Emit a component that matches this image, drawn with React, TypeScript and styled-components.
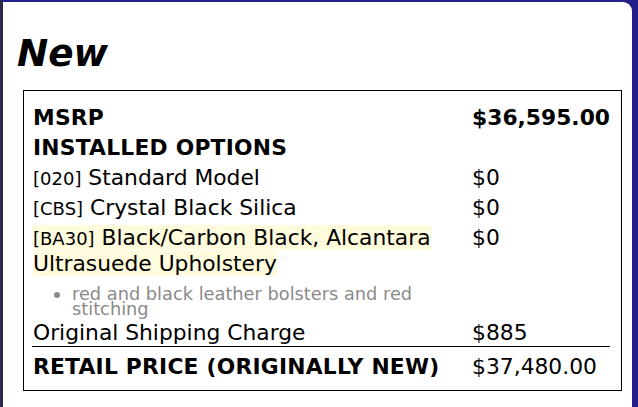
import styled, { createGlobalStyle } from "styled-components";

const GlobalStyle = createGlobalStyle`
  html, body {
    margin: 0;
    padding: 0;
    background: #23208a;
  }
  body {
    font-family: "DejaVu Sans", Verdana, sans-serif;
    color: #000;
  }
`;

const Page = styled.div`
  min-height: 407px;
  padding-top: 2px;
  border-left: 3px solid #2c2b4c;
  box-sizing: border-box;
  display: flex;
`;

const Card = styled.div`
  flex: 1;
  margin-right: 6px;
  background: #fff;
  border-top-right-radius: 9px;
  padding: 30px 10px 16px 20px;
  min-height: 405px;
  box-sizing: border-box;
`;

const Title = styled.h2`
  margin: 0 0 15px -6px;
  font-size: 37.33px;
  line-height: 43px;
  font-weight: bold;
  font-style: italic;
`;

const Box = styled.div`
  border: 1px solid #000;
  padding: 12px 11px 8px 8px;
`;

const Table = styled.table`
  width: 100%;
  border-collapse: collapse;
  font-size: 21.8px;
  line-height: 26px;
`;

type Variant = "total" | "beforeTotal";

const Row = styled.tr<{ $variant?: Variant }>`
  td {
    border-top: ${(p) => (p.$variant === "total" ? "1px solid #000" : "none")};
    padding-top: ${(p) => (p.$variant === "total" ? "7px" : "2px")};
    padding-bottom: ${(p) => (p.$variant === "beforeTotal" ? "0" : "2px")};
  }
`;

const Cell = styled.td<{ $bold?: boolean }>`
  padding: 2px 0 2px 1px;
  vertical-align: top;
  font-weight: ${(p) => (p.$bold ? "bold" : "normal")};
  letter-spacing: ${(p) => (p.$bold ? "0.22px" : "normal")};
`;

const Price = styled(Cell)`
  width: 136px;
  white-space: nowrap;
  letter-spacing: normal;
`;

const Code = styled.span`
  font-size: 18px;
  line-height: 0;
`;

const Highlight = styled.span`
  background: #fffbdc;
`;

const Notes = styled.ul`
  margin: 9px 0 0;
  padding-left: 39px;
  color: #8a8a8a;
  font-size: 17.78px;
  line-height: 15px;
`;

const options = [
  { code: "020", name: "Standard Model", price: "$0" },
  { code: "CBS", name: "Crystal Black Silica", price: "$0" },
];

const App = () => (
  <>
    <GlobalStyle />
    <Page>
      <Card>
        <Title>New</Title>
        <Box>
          <Table>
            <tbody>
              <Row>
                <Cell $bold>MSRP</Cell>
                <Price $bold>$36,595.00</Price>
              </Row>
              <Row>
                <Cell $bold>INSTALLED OPTIONS</Cell>
                <Price />
              </Row>
              {options.map((o) => (
                <Row key={o.code}>
                  <Cell>
                    <Code>[{o.code}]</Code> {o.name}
                  </Cell>
                  <Price>{o.price}</Price>
                </Row>
              ))}
              <Row>
                <Cell>
                  <Highlight>
                    <Code>[BA30]</Code> Black/Carbon Black, Alcantara Ultrasuede
                    Upholstery
                  </Highlight>
                  <Notes>
                    <li>red and black leather bolsters and red stitching</li>
                  </Notes>
                </Cell>
                <Price>$0</Price>
              </Row>
              <Row $variant="beforeTotal">
                <Cell>Original Shipping Charge</Cell>
                <Price>$885</Price>
              </Row>
              <Row $variant="total">
                <Cell $bold>RETAIL PRICE (ORIGINALLY NEW)</Cell>
                <Price>$37,480.00</Price>
              </Row>
            </tbody>
          </Table>
        </Box>
      </Card>
    </Page>
  </>
);

export default App;
